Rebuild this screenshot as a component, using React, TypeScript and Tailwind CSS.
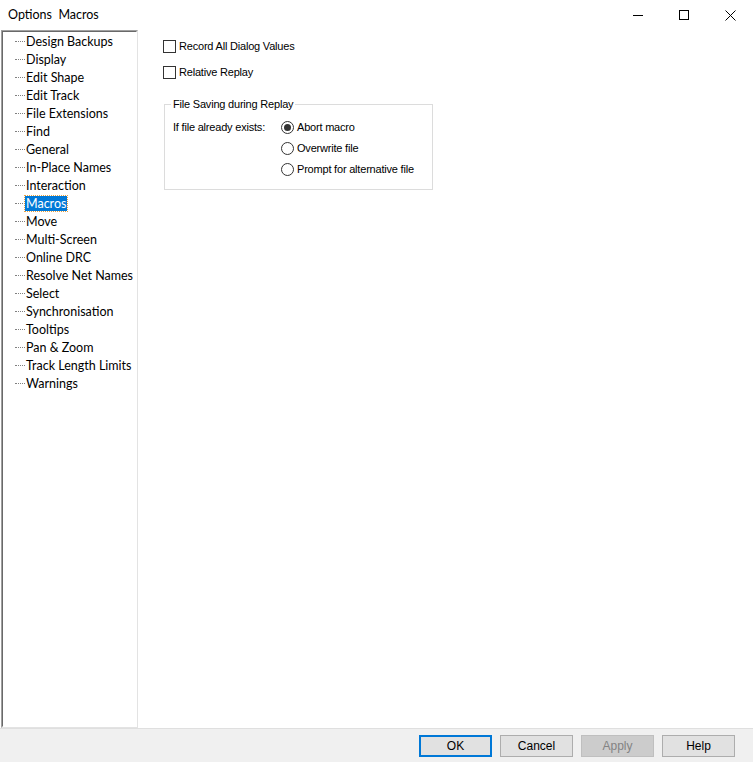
export default function App() {
  const items = ["Design Backups","Display","Edit Shape","Edit Track","File Extensions","Find","General","In-Place Names","Interaction","Macros","Move","Multi-Screen","Online DRC","Resolve Net Names","Select","Synchronisation","Tooltips","Pan & Zoom","Track Length Limits","Warnings"];
  const ui = { fontFamily: '"Liberation Sans", Arial, sans-serif' };
  const tree = { fontFamily: 'Lato, "Noto Sans", sans-serif' };
  const Radio = ({ on, label }: { on?: boolean; label: string }) => (
    <div className="flex items-center h-[21px]">
      <div className="w-[13px] h-[13px] rounded-full border border-[#333] bg-white flex items-center justify-center">
        {on && <div className="w-[7px] h-[7px] rounded-full bg-[#333]" />}
      </div>
      <span className="ml-[3px]">{label}</span>
    </div>
  );
  const Btn = ({ label, cls }: { label: string; cls: string }) => (
    <div className={`w-[73px] h-[22px] flex items-center justify-center text-[12px] ${cls}`}>{label}</div>
  );
  return (
    <div className="w-[753px] h-[762px] bg-white flex flex-col text-black overflow-hidden" style={ui}>
      <div className="h-[30px] flex items-center pl-[8px] text-[12.5px] relative" style={tree}>
        <span>Options&nbsp; Macros</span>
        <div className="absolute right-0 top-0 h-[30px] flex">
          <div className="w-[46px] flex items-center justify-center"><div className="w-[10px] h-px bg-black" /></div>
          <div className="w-[46px] flex items-center justify-center"><div className="w-[10px] h-[10px] border border-black" /></div>
          <div className="w-[46px] flex items-center justify-center">
            <svg width="11" height="11" viewBox="0 0 11 11"><path d="M0.5 0.5L10.5 10.5M10.5 0.5L0.5 10.5" stroke="black" /></svg>
          </div>
        </div>
      </div>
      <div className="flex-1 flex">
        <div className="ml-[1px] w-[137px] border border-[#a0a0a0] border-r-[#e3e3e3] border-b-[#e3e3e3] bg-white text-[12.5px]" style={tree}>
          <div className="border border-[#696969] border-r-white border-b-white h-full">
            {items.map((it) => (
              <div key={it} className="h-[18px] flex items-center whitespace-nowrap">
                <div className="w-[10px] ml-[12px] border-t border-dotted border-[#808080]" />
                <span className={`px-[1px] leading-[15px] ${it === "Macros" ? "bg-[#0078d7] text-white outline outline-1 outline-dotted outline-[#e8a040]" : ""}`}>{it}</span>
              </div>
            ))}
          </div>
        </div>
        <div className="flex-1 pl-[25px] pt-[10px] text-[11px] tracking-[-0.2px]">
          <div className="flex items-center h-[13px]">
            <div className="w-[13px] h-[13px] border border-[#333] bg-white" />
            <span className="ml-[3px]">Record All Dialog Values</span>
          </div>
          <div className="flex items-center h-[13px] mt-[13px]">
            <div className="w-[13px] h-[13px] border border-[#333] bg-white" />
            <span className="ml-[3px]">Relative Replay</span>
          </div>
          <div className="relative mt-[25px] ml-[1px] w-[269px] h-[86px] border border-[#dcdcdc]">
            <span className="absolute -top-[7px] left-[6px] bg-white px-[2px] leading-[13px]">File Saving during Replay</span>
            <div className="flex pt-[12px] pl-[8px]">
              <span className="w-[108px] leading-[21px]">If file already exists:</span>
              <div className="flex flex-col">
                <Radio on label="Abort macro" />
                <Radio label="Overwrite file" />
                <Radio label="Prompt for alternative file" />
              </div>
            </div>
          </div>
        </div>
      </div>
      <div className="h-[34px] bg-[#f0f0f0] border-t border-[#dfdfdf] flex items-center justify-end gap-[8px] pr-[18px]">
        <Btn label="OK" cls="bg-[#e1e1e1] border-2 border-[#0078d7]" />
        <Btn label="Cancel" cls="bg-[#e1e1e1] border border-[#adadad]" />
        <Btn label="Apply" cls="bg-[#cccccc] border border-[#bfbfbf] text-[#838383]" />
        <Btn label="Help" cls="bg-[#e1e1e1] border border-[#adadad]" />
      </div>
    </div>
  );
}
